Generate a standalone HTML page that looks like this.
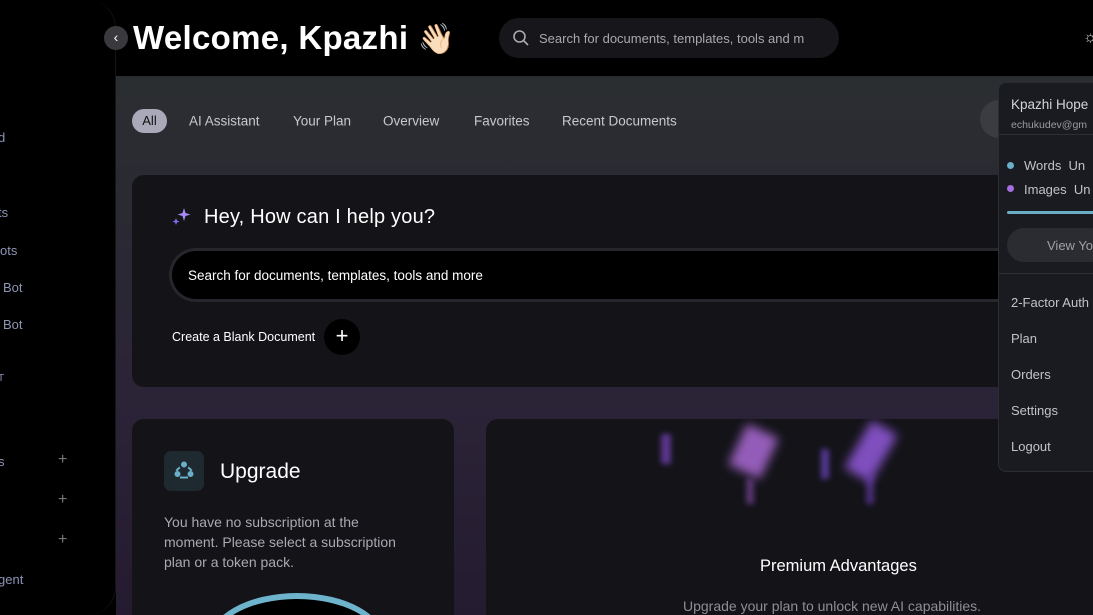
<!DOCTYPE html>
<html style="width:1093px;height:615px;overflow:hidden"><head><meta charset="utf-8"><style>
*{margin:0;padding:0;box-sizing:border-box}
body{width:1093px;height:615px;overflow:hidden;background:#000;font-family:"Liberation Sans",sans-serif;position:relative;color:#fff}
.main{position:absolute;left:116px;top:76px;width:977px;height:539px;background:linear-gradient(180deg,#2b2e31 0%,#2a2a33 25%,#2b2336 60%,#241b30 100%);border-top:1px solid #2a2a2a}
.side{position:absolute;left:0;top:0;width:116px;height:615px;background:#000;border-radius:0 28px 28px 0;border-right:1px solid #151515}
.side div{position:absolute;font-size:13px;color:#8e95b4}
.plus{color:#777!important;font-size:16px!important}
.card{position:absolute;background:#131318;border-radius:12px 12px 0 0;overflow:hidden}
.tab{position:absolute;top:121px;font-size:13.5px;color:#c9c9cc;transform:translateY(-50%)}
.dd{position:absolute;left:998px;top:82px;width:95px;height:390px;background:#1a1b20;border:1px solid #2c2d33;border-right:none;border-radius:8px 0 0 8px;overflow:hidden}
.dd div{position:absolute;font-size:13px;color:#c2c3c8;white-space:nowrap}
.clip{position:absolute;left:0;top:0;width:1093px;height:615px;overflow:hidden}
</style></head><body><div class="clip">
<div class="main"></div>
<div class="side">
<div style="left:-2px;top:130px">d</div>
<div style="left:-2px;top:205px">ts</div>
<div style="left:0;top:243px">ots</div>
<div style="left:3px;top:280px">Bot</div>
<div style="left:3px;top:317px">Bot</div>
<div style="left:-2px;top:373px;font-size:10px">T</div>
<div style="left:-2px;top:454px">s</div>
<div class="plus" style="left:58px;top:451px">+</div>
<div class="plus" style="left:58px;top:491px">+</div>
<div class="plus" style="left:58px;top:531px">+</div>
<div style="left:-2px;top:572px">gent</div>
</div>
<div style="position:absolute;left:104px;top:26px;width:24px;height:24px;border-radius:50%;background:#3a3a3e;color:#fff;font-size:14px;text-align:center;line-height:23px">‹</div>
<div style="position:absolute;left:133px;top:19px;font-size:33px;font-weight:bold;letter-spacing:0.3px;white-space:nowrap">Welcome, Kpazhi <span style="font-size:30px">👋🏻</span></div>
<div style="position:absolute;left:499px;top:18px;width:340px;height:40px;border-radius:20px;background:#17171b;">
<svg style="position:absolute;left:13px;top:11px" width="18" height="18" viewBox="0 0 18 18" fill="none" stroke="#aaa" stroke-width="1.6"><circle cx="7.5" cy="7.5" r="5.5"/><path d="M11.5 11.5l4.5 4.5"/></svg>
<span style="position:absolute;left:40px;top:13px;font-size:13px;color:#a8a8ad;white-space:nowrap">Search for documents, templates, tools and m</span></div>
<div style="position:absolute;left:1083px;top:29px;color:#ccc;font-size:16px">☼</div>
<div style="position:absolute;left:132px;top:109px;width:35px;height:24px;border-radius:12px;background:#a9a9b9;color:#111;font-size:13px;text-align:center;line-height:24px">All</div>
<div class="tab" style="left:189px">AI Assistant</div>
<div class="tab" style="left:293px">Your Plan</div>
<div class="tab" style="left:383px">Overview</div>
<div class="tab" style="left:474px">Favorites</div>
<div class="tab" style="left:562px">Recent Documents</div>
<div style="position:absolute;left:980px;top:100px;width:40px;height:38px;border-radius:19px;background:#3a3c40"></div>
<div class="card" style="left:132px;top:175px;width:961px;height:212px;border-radius:12px 0 0 12px"></div>
<svg style="position:absolute;left:171px;top:207px" width="22" height="20" viewBox="0 0 22 20"><path d="M13 1 L14.5 6 L19.5 7.5 L14.5 9 L13 14 L11.5 9 L6.5 7.5 L11.5 6Z" fill="#a78bfa"/><path d="M5 11 L6 13.5 L8.5 14.5 L6 15.5 L5 18 L4 15.5 L1.5 14.5 L4 13.5Z" fill="#7c6cf0"/></svg>
<div style="position:absolute;left:204px;top:206px;font-size:20px;letter-spacing:0.2px">Hey, How can I help you?</div>
<div style="position:absolute;left:169px;top:248px;width:924px;height:54px;border-radius:27px 0 0 27px;background:#000;border:3px solid #26262c;border-right:none"></div>
<div style="position:absolute;left:188px;top:268px;font-size:13.5px">Search for documents, templates, tools and more</div>
<div style="position:absolute;left:172px;top:330px;font-size:12.5px">Create a Blank Document</div>
<div style="position:absolute;left:324px;top:319px;width:36px;height:36px;border-radius:50%;background:#000;text-align:center;line-height:34px;font-size:22px">+</div>
<div class="card" style="left:132px;top:419px;width:322px;height:196px">
<div style="position:absolute;left:76px;top:174px;width:178px;height:100px;border-radius:50%;border:6px solid #6db3cc;background:#000"></div>
</div>
<div style="position:absolute;left:164px;top:451px;width:40px;height:40px;border-radius:7px;background:#1e2a30">
<svg width="40" height="40" viewBox="0 0 40 40" fill="none" stroke="#6aaec8" stroke-width="2"><circle cx="20" cy="13.5" r="2" fill="#6aaec8"/><circle cx="13.5" cy="23" r="2" fill="#6aaec8"/><circle cx="26.5" cy="23" r="2" fill="#6aaec8"/><path d="M16 16.5a7 7 0 0 0-3.5 3.5M24 16.5a7 7 0 0 1 3.5 3.5M16 26.5h8"/></svg></div>
<div style="position:absolute;left:220px;top:460px;font-size:21px">Upgrade</div>
<div style="position:absolute;left:164px;top:512px;width:250px;font-size:14px;line-height:20px;color:#a9a9b0">You have no subscription at the moment. Please select a subscription plan or a token pack.</div>
<div class="card" style="left:486px;top:419px;width:607px;height:196px;border-radius:12px 0 0 0">
<div style="position:absolute;left:250px;top:10px;width:35px;height:45px;background:#b46fe0;filter:blur(5px);transform:rotate(25deg);opacity:.8"></div>
<div style="position:absolute;left:370px;top:5px;width:30px;height:55px;background:#9a5ee8;filter:blur(5px);transform:rotate(30deg);opacity:.8"></div>
<div style="position:absolute;left:175px;top:15px;width:10px;height:30px;background:#7a45c0;filter:blur(3px);opacity:.7"></div>
<div style="position:absolute;left:335px;top:30px;width:8px;height:30px;background:#7048c8;filter:blur(3px);opacity:.7"></div>
<div style="position:absolute;left:260px;top:60px;width:8px;height:25px;background:#8a4fb0;filter:blur(3px);opacity:.6"></div>
<div style="position:absolute;left:380px;top:55px;width:8px;height:30px;background:#7040b8;filter:blur(3px);opacity:.6"></div>
<div style="position:absolute;left:274px;top:138px;font-size:16.5px;color:#fff;white-space:nowrap">Premium Advantages</div>
<div style="position:absolute;left:197px;top:179px;font-size:14px;color:#8e8e96;white-space:nowrap">Upgrade your plan to unlock new AI capabilities.</div>
</div>
<div class="dd">
<div style="left:12px;top:14px;font-size:13.5px;color:#d5d5d9">Kpazhi Hope</div>
<div style="left:12px;top:36px;font-size:10.5px;color:#9a9aa0">echukudev@gm</div>
<div style="left:0;top:51px;width:110px;height:1px;background:#2e2f35"></div>
<div style="left:8px;top:79px;width:7px;height:7px;border-radius:50%;background:#6aaec8"></div>
<div style="left:25px;top:75px">Words &nbsp;Un</div>
<div style="left:8px;top:102px;width:7px;height:7px;border-radius:50%;background:#a66ee0"></div>
<div style="left:25px;top:99px">Images &nbsp;Un</div>
<div style="left:8px;top:128px;width:100px;height:3px;border-radius:2px;background:#6aaec8"></div>
<div style="left:8px;top:145px;width:100px;height:34px;border-radius:17px;background:#2a2c31;color:#a0a0a5;padding:10px 0 0 40px">View Yo</div>
<div style="left:0;top:190px;width:110px;height:1px;background:#2e2f35"></div>
<div style="left:12px;top:212px">2-Factor Auth</div>
<div style="left:12px;top:248px">Plan</div>
<div style="left:12px;top:284px">Orders</div>
<div style="left:12px;top:320px">Settings</div>
<div style="left:12px;top:356px">Logout</div>
</div>
</div></body></html>
